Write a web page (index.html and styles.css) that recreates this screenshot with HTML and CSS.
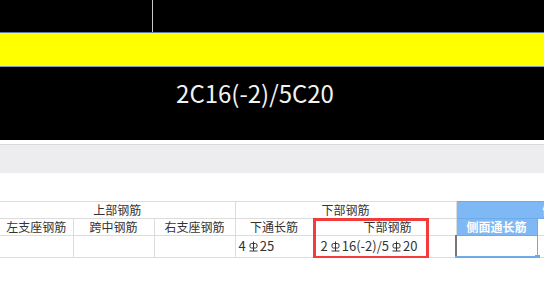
FILE: index.html
```html
<!DOCTYPE html>
<html lang="zh-CN">
<head>
    <meta charset="UTF-8">
    <title>梁平法表格</title>
    <link rel="stylesheet" href="styles.css">
</head>
<body>
    <div class="canvas">
        <div class="canvas-top">
            <div class="canvas-left"></div>
        </div>
        <div class="beam-band"></div>
        <div class="canvas-label">
            <span class="label-text">2C16(-2)/5C20</span>
        </div>
    </div>

    <div class="toolbar"></div>

    <div class="grid-wrap">
        <table class="grid">
            <colgroup>
                <col style="width: 73px">
                <col style="width: 81px">
                <col style="width: 81px">
                <col style="width: 78px">
                <col style="width: 143px">
                <col style="width: 81px">
                <col style="width: 140px">
            </colgroup>
            <tr class="head-row">
                <td colspan="3" class="first">上部钢筋</td>
                <td colspan="2">下部钢筋</td>
                <td colspan="2" class="blue">侧面钢筋</td>
            </tr>
            <tr class="head-row">
                <td class="first">左支座钢筋</td>
                <td>跨中钢筋</td>
                <td>右支座钢筋</td>
                <td>下通长筋</td>
                <td class="shift">下部钢筋</td>
                <td class="blue">侧面通长筋</td>
                <td></td>
            </tr>
            <tr class="data-row">
                <td class="first"></td>
                <td></td>
                <td></td>
                <td>4<svg class="rebar" viewBox="0 0 9 11"><rect x="1" y="2.5" width="7" height="4.5" rx="1.5"/><path d="M4.5 0.5V10M0.5 10H8.5"/></svg>25</td>
                <td class="pad">2<svg class="rebar" viewBox="0 0 9 11"><rect x="1" y="2.5" width="7" height="4.5" rx="1.5"/><path d="M4.5 0.5V10M0.5 10H8.5"/></svg>16(-2)/5<svg class="rebar" viewBox="0 0 9 11"><rect x="1" y="2.5" width="7" height="4.5" rx="1.5"/><path d="M4.5 0.5V10M0.5 10H8.5"/></svg>20</td>
                <td class="selected"><span class="handle"></span></td>
                <td></td>
            </tr>
        </table>
        <div class="mark"></div>
    </div>
</body>
</html>
```

FILE: styles.css
```css
body {
    margin: 0;
    width: 544px;
    height: 290px;
    overflow: hidden;
    background: #fff;
    font-family: "Noto Sans CJK SC", "Noto Sans", sans-serif;
}

.canvas {
    background: #000;
}

.canvas-top {
    height: 32px;
}

.canvas-left {
    width: 152px;
    height: 32px;
    border-right: 1px solid #c8c8c8;
}

.beam-band {
    height: 33px;
    background: #ffff00;
    border-top: 1px solid #5b7fa3;
    border-bottom: 1px solid #7f9fbf;
}

.canvas-label {
    height: 73px;
    text-align: center;
}

.label-text {
    display: inline-block;
    margin: 9px 34px 0 0;
    color: #f2f2f2;
    font-size: 24px;
    line-height: 34px;
}

.toolbar {
    margin-top: 4px;
    height: 28px;
    background: #ededef;
    border-top: 1px solid #d9d9d9;
}

.grid-wrap {
    position: relative;
    margin-top: 28px;
    width: 544px;
    overflow: hidden;
}

.grid {
    border-collapse: collapse;
    table-layout: fixed;
    width: 677px;
    font-size: 12px;
    color: #333;
}

.grid td {
    border: 1px solid #dcdcdc;
    padding: 0;
    text-align: center;
    white-space: nowrap;
    overflow: hidden;
}

.grid td.first {
    border-left: none;
}

.head-row td {
    height: 16px;
    line-height: 16px;
}

.data-row td {
    height: 20px;
    line-height: 20px;
    text-align: left;
    padding-left: 3px;
    font-size: 13px;
}

.data-row td.pad {
    padding-left: 7px;
}

.grid td.shift {
    padding-left: 6px;
}

.grid td.blue {
    background: #7fb9f5;
    color: #fff;
    border-color: #6ea9e8;
    font-weight: bold;
}

.grid td.selected {
    position: relative;
    border-left: 2px solid #777;
    border-bottom: 2px solid #6ea9e8;
    border-right: 1px solid #6ea9e8;
    overflow: visible;
}

.handle {
    position: absolute;
    right: -3px;
    bottom: -4px;
    width: 5px;
    height: 5px;
    background: #6ea9e8;
}

.rebar {
    width: 9px;
    height: 11px;
    margin: 0 2px 0 3px;
    vertical-align: -1px;
    fill: none;
    stroke: #333;
    stroke-width: 1;
}

.mark {
    position: absolute;
    left: 313px;
    top: 17px;
    width: 110px;
    height: 35px;
    border: 3px solid #f43b3b;
}
```
